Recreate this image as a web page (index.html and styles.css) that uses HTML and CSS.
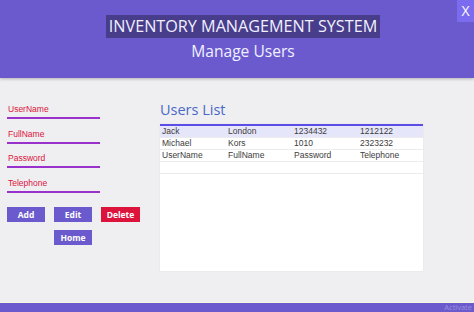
FILE: index.html
```html
<!DOCTYPE html>
<html>
<head>
    <title>Manage Users</title>
    <link rel="stylesheet" href="styles.css">
</head>
<body>
<div class="header">
    <div class="close">X</div>
    <div class="title">INVENTORY MANAGEMENT SYSTEM</div>
    <div class="subtitle">Manage Users</div>
</div>

<div class="main">
    <div class="form">
        <div class="field"><label>UserName</label><div class="line"></div></div>
        <div class="field"><label>FullName</label><div class="line"></div></div>
        <div class="field"><label>Password</label><div class="line"></div></div>
        <div class="field"><label>Telephone</label><div class="line"></div></div>
        <div class="buttons">
            <button class="btn">Add</button>
            <button class="btn">Edit</button>
            <button class="btn delete">Delete</button>
        </div>
        <div class="buttons second">
            <button class="btn">Home</button>
        </div>
    </div>

    <div class="list">
        <h2>Users List</h2>
        <div class="grid">
            <div class="row selected"><span>Jack</span><span>London</span><span>1234432</span><span>1212122</span></div>
            <div class="row"><span>Michael</span><span>Kors</span><span>1010</span><span>2323232</span></div>
            <div class="row"><span>UserName</span><span>FullName</span><span>Password</span><span>Telephone</span></div>
            <div class="row empty"></div>
        </div>
    </div>
</div>

<div class="footer"><span class="watermark">Activate</span></div>
</body>
</html>
```

FILE: styles.css
```css
body {
    margin: 0;
    width: 474px;
    height: 312px;
    overflow: hidden;
    background-color: #efeff1;
    font-family: "Open Sans", "Noto Sans", sans-serif;
    display: flex;
    flex-direction: column;
}

.header {
    position: relative;
    height: 78px;
    padding-left: 12px;
    background-color: #6a5acd;
    display: flex;
    flex-direction: column;
    align-items: center;
    box-shadow: 0 1px 3px rgba(0, 0, 0, 0.25);
}

.close {
    position: absolute;
    top: 0;
    right: 0;
    width: 17px;
    height: 22px;
    background-color: #7b6bee;
    color: #fff;
    font-size: 14px;
    line-height: 22px;
    text-align: center;
}

.title {
    margin-top: 15px;
    background-color: #483d8b;
    color: #f0f0ff;
    font-size: 16.2px;
    line-height: 23px;
    padding: 0 3px;
}

.subtitle {
    color: #f0f0ff;
    font-size: 15.6px;
    line-height: 22px;
    margin-top: 2px;
}

.main {
    flex: 1;
    display: flex;
}

.form {
    width: 153px;
    padding: 26px 0 0 7px;
    box-sizing: border-box;
}

.field {
    height: 24.5px;
}

.field label {
    display: block;
    color: #dc143c;
    font-family: "Liberation Sans", Arial, sans-serif;
    font-size: 8.5px;
    line-height: 10px;
    padding-left: 1px;
    margin-bottom: 3px;
}

.line {
    width: 93px;
    height: 2px;
    background-color: #9932cc;
}

.buttons {
    display: flex;
    gap: 9px;
    margin-top: 5px;
}

.buttons.second {
    margin-top: 8px;
    padding-left: 47px;
}

.btn {
    width: 38px;
    height: 15px;
    padding: 0;
    border: none;
    background-color: #6a5acd;
    color: #fff;
    font-family: "Open Sans", sans-serif;
    font-weight: bold;
    font-size: 8.5px;
}

.btn.delete {
    width: 39px;
    background-color: #dc143c;
}

.list {
    padding: 22px 0 0 7px;
}

.list h2 {
    margin: 0 0 5px 0;
    font-weight: normal;
    font-size: 14.5px;
    line-height: 19px;
    color: #4a68c8;
}

.grid {
    width: 263px;
    height: 145px;
    background-color: #fff;
    border-top: 2px solid #5b4ee6;
    box-shadow: 0 0 1px rgba(0, 0, 0, 0.1);
}

.row {
    display: grid;
    grid-template-columns: 66px 66px 66px 65px;
    height: 11px;
    border-bottom: 1px solid #ececec;
    font-family: "Liberation Sans", Arial, sans-serif;
    font-size: 8.5px;
    line-height: 11px;
    color: #3c3c3c;
}

.row span {
    padding-left: 2px;
}

.row.selected {
    background-color: #e6e6fa;
}

.footer {
    height: 9px;
    background-color: #6a5acd;
    border-top: 1px solid #f5f5e0;
    display: flex;
    justify-content: flex-end;
}

.watermark {
    padding-right: 2px;
    font-family: "Open Sans", sans-serif;
    font-size: 7.5px;
    line-height: 9px;
    color: #9a90dc;
}
```
